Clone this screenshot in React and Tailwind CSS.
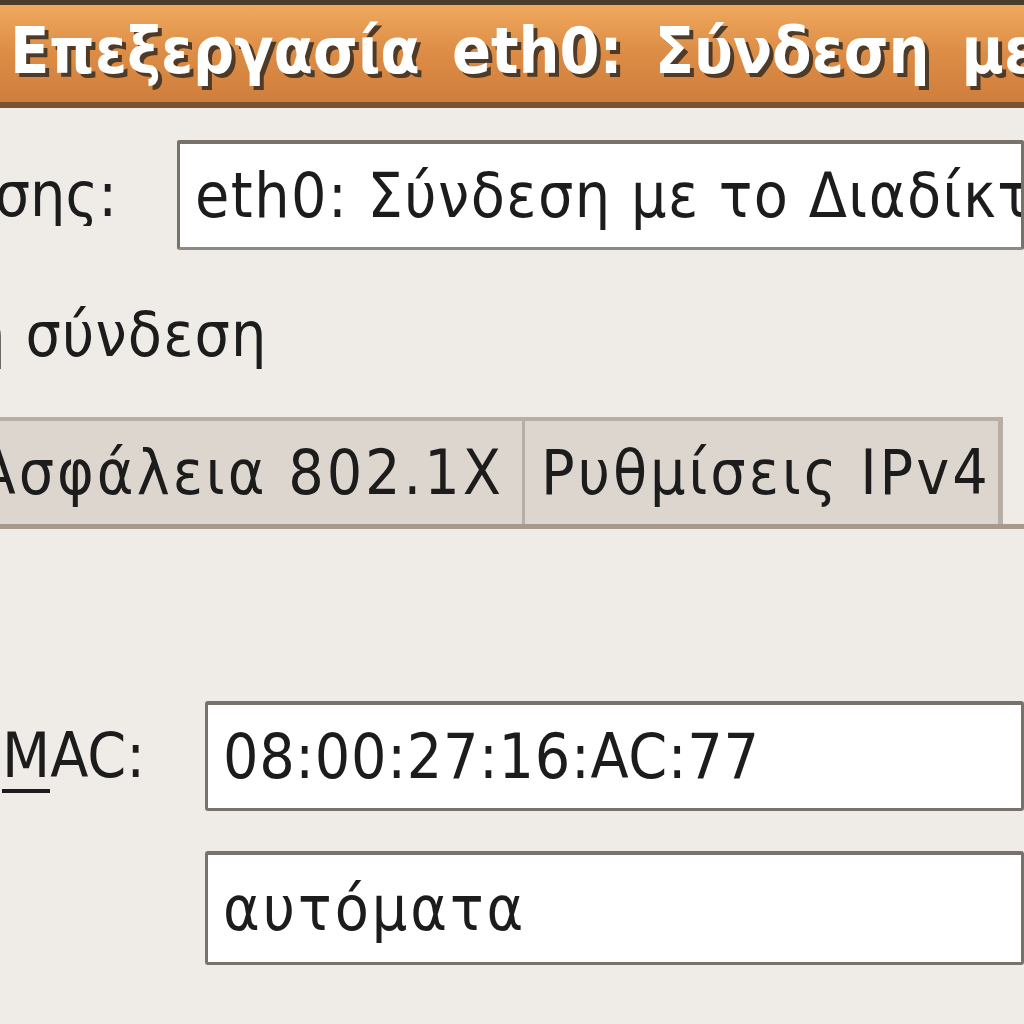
export default function App() {
  const font = { fontFamily: '"DejaVu Sans Condensed", "DejaVu Sans", sans-serif' }
  return (
    <div className="w-[1024px] h-[1024px] overflow-hidden bg-[#efebe7] text-[#1c1c1c]" style={font}>
      {/* Title bar */}
      <div className="h-[108px] border-t-[5px] border-t-[#4b3d2b] border-b-[6px] border-b-[#7a5330] bg-gradient-to-b from-[#f0a85e] via-[#dc8c45] to-[#cf7f3c] flex items-center">
        <span className="pl-[10px] -mt-[6px] whitespace-nowrap text-[64px] font-bold text-white leading-none [word-spacing:12px] [text-shadow:4px_4px_0_#4e3a26]">
          Επεξεργασία eth0: Σύνδεση με το Διαδίκτυο
        </span>
      </div>

      {/* Connection name */}
      <div className="flex items-center mt-[32px] h-[110px]">
        <div className="w-[177px] shrink-0 overflow-hidden flex justify-end pr-[60px]">
          <span className="whitespace-nowrap text-[62px] leading-none">Όνομα σύνδεσης:</span>
        </div>
        <div className="flex-1 h-[110px] bg-white border-[3px] border-t-[4px] border-[#78726b] border-b-[#8f8983] rounded-[3px] flex items-center pl-[15px] overflow-hidden">
          <span className="whitespace-nowrap text-[62px] leading-none tracking-[1.5px]">eth0: Σύνδεση με το Διαδίκτυο</span>
        </div>
      </div>

      {/* Auto connect */}
      <div className="mt-[50px] h-[70px] flex items-center overflow-hidden">
        <span className="-ml-[30px] whitespace-nowrap text-[62px] leading-none tracking-[1.2px]">η σύνδεση</span>
      </div>

      {/* Tabs */}
      <div className="mt-[47px] flex items-end h-[112px] border-b-[5px] border-[#a79a8d]">
        <div className="w-[525px] h-[107px] shrink-0 overflow-hidden bg-[#ddd6cf] border-t-[4px] border-r-[3px] border-[#b7aea5] flex items-center justify-end pr-[18px]">
          <span className="whitespace-nowrap text-[62px] leading-none tracking-[3px]">Ασφάλεια 802.1X</span>
        </div>
        <div className="w-[478px] h-[107px] shrink-0 bg-[#ddd6cf] border-t-[4px] border-r-[5px] border-[#b7aea5] flex items-center pl-[16px]">
          <span className="whitespace-nowrap text-[62px] leading-none tracking-[3px]">Ρυθμίσεις IPv4</span>
        </div>
      </div>

      {/* MAC */}
      <div className="flex items-center mt-[172px] h-[110px]">
        <div className="w-[205px] h-[110px] shrink-0 overflow-hidden flex items-center justify-end pr-[60px]">
          <span className="whitespace-nowrap text-[62px] leading-none">
            Διεύθυνση <span className="inline-block border-b-[4px] border-[#1c1c1c] pb-[2px] -mb-[6px]">M</span>AC:
          </span>
        </div>
        <div className="flex-1 h-[110px] bg-white border-[3px] border-t-[4px] border-[#78726b] rounded-[3px] flex items-center pl-[15px] overflow-hidden">
          <span className="whitespace-nowrap text-[62px] leading-none tracking-[0.7px]">08:00:27:16:AC:77</span>
        </div>
      </div>

      {/* MTU */}
      <div className="flex items-center mt-[40px] h-[114px]">
        <div className="w-[205px] shrink-0" />
        <div className="flex-1 h-[114px] bg-white border-[3px] border-t-[4px] border-[#78726b] rounded-[3px] flex items-center pl-[15px] overflow-hidden">
          <span className="whitespace-nowrap text-[62px] leading-none tracking-[3px]">αυτόματα</span>
        </div>
      </div>
    </div>
  )
}
